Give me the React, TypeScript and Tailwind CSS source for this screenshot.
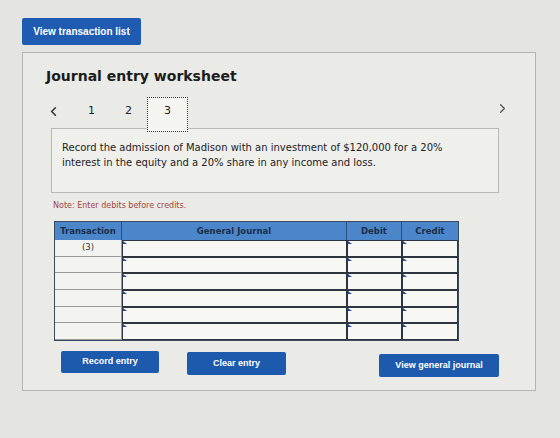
import { ChevronLeft, ChevronRight } from "lucide-react";

const font = { fontFamily: '"DejaVu Sans", Verdana, sans-serif' };
const btnFont = { fontFamily: '"Liberation Sans", Arial, sans-serif' };

function Cell({ w, marker = true }: { w: string; marker?: boolean }) {
  return (
    <div className={`relative h-full border-[1.5px] border-[#2e3440] bg-[#f7f7f4] ${w}`}>
      {marker && (
        <span className="absolute left-0 top-0 h-0 w-0 border-l-[4px] border-t-[3px] border-l-[#1d4f9a] border-t-transparent" />
      )}
    </div>
  );
}

export default function App() {
  const rows = ["(3)", "", "", "", "", ""];

  return (
    <div
      className="h-[438px] w-[560px] overflow-hidden bg-[#e4e4e1] pl-[22px] pt-[18px]"
      style={font}
    >
      <button
        type="button"
        style={btnFont}
        className="flex h-[27px] w-[119px] items-center justify-center rounded-[2px] bg-[#1f5bb1] text-[10px] font-bold text-white"
      >
        View transaction list
      </button>

      {/* Worksheet panel */}
      <div className="mt-[7px] h-[339px] w-[514px] border border-[#b4b4b0] bg-[#eaeae7] pl-[23px] pt-[13px]">
        <h1 className="text-[14px] font-bold leading-[20px] text-[#1c1c1c]">
          Journal entry worksheet
        </h1>

        <div className="relative mt-[8px] flex h-[35px] items-center">
          <ChevronLeft className="h-[15px] w-[15px] text-[#333]" strokeWidth={2.5} />
          <span className="ml-[27px] text-[11px] text-[#222]">1</span>
          <span className="ml-[30px] text-[11px] text-[#222]">2</span>
          <div className="z-10 ml-[15px] mt-[6px] flex h-[35px] w-[41px] items-start justify-center border-[1.5px] border-dotted border-[#2a3a5a] bg-[#f4f4f1] pt-[5px] text-[11px] text-[#222]">
            3
          </div>
          <ChevronRight className="-mt-[6px] ml-auto mr-[25px] h-[15px] w-[15px] text-[#555]" strokeWidth={2} />
        </div>

        <div className="-mt-[1px] ml-[5px] h-[65px] w-[448px] border border-[#b8b8b4] bg-[#efefec] pl-[10px] pt-[11px]">
          <p className="text-[10px] leading-[15px] text-[#222]">
            Record the admission of Madison with an investment of $120,000 for a 20%
            <br />
            interest in the equity and a 20% share in any income and loss.
          </p>
        </div>

        <p className="ml-[7px] mt-[7px] text-[8px] text-[#a3463c]">
          Note: Enter debits before credits.
        </p>

        {/* Journal table */}
        <div className="ml-[8px] mt-[9px] w-[405px] border border-[#3a4a60]">
          <div className="flex h-[18px] bg-[#4a86c9] text-[8.5px] font-bold text-[#1b2d48]">
            <div className="flex w-[67px] items-center justify-center border-r border-[#2f4f7a]">
              Transaction
            </div>
            <div className="flex w-[225px] items-center justify-center border-r border-[#2f4f7a]">
              General Journal
            </div>
            <div className="flex w-[55px] items-center justify-center border-r border-[#2f4f7a]">
              Debit
            </div>
            <div className="flex flex-1 items-center justify-center">Credit</div>
          </div>
          {rows.map((label, i) => (
            <div key={i} className="flex h-[16.7px]">
              <div className="flex w-[67px] items-center justify-center border-b border-r border-[#9a9a96] bg-[#f3f3f0] text-[8.5px] text-[#333]">
                {label}
              </div>
              <Cell w="w-[225px]" />
              <Cell w="w-[55px]" />
              <Cell w="flex-1" />
            </div>
          ))}
        </div>

        <div
          className="mt-[10px] flex items-start text-[9px] font-bold text-white"
          style={btnFont}
        >
          <button
            type="button"
            className="ml-[15px] h-[22px] w-[98px] rounded-[2px] bg-[#1d59ad]"
          >
            Record entry
          </button>
          <button
            type="button"
            className="ml-[28px] mt-[1px] h-[23px] w-[99px] rounded-[2px] bg-[#1d59ad]"
          >
            Clear entry
          </button>
          <button
            type="button"
            className="ml-[93px] mt-[3px] h-[23px] w-[120px] rounded-[2px] bg-[#1d59ad]"
          >
            View general journal
          </button>
        </div>
      </div>
    </div>
  );
}
